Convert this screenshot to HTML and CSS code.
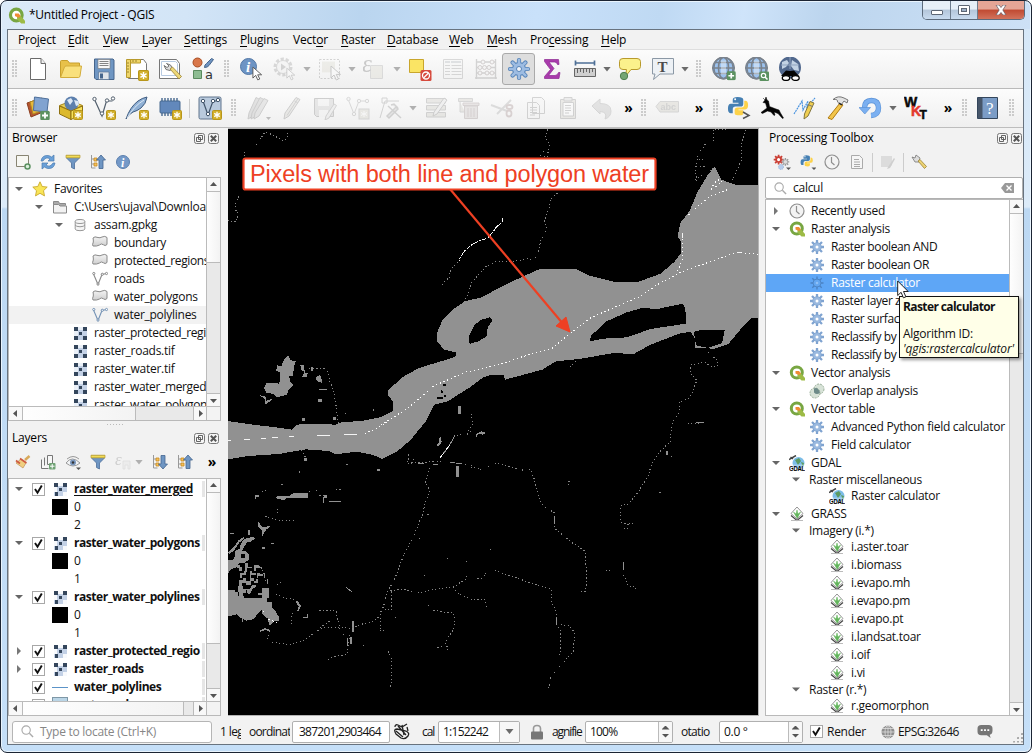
FILE: index.html
```html
<!DOCTYPE html>
<html lang="en">
<head>
<meta charset="utf-8">
<title>*Untitled Project - QGIS</title>
<link rel="stylesheet" href="styles.css">
</head>
<body>
<svg class="defs" aria-hidden="true">
<defs>
<linearGradient id="gloss" x1="0" y1="0" x2="0" y2="1"><stop offset="0" stop-color="#f4f4f4"/><stop offset="1" stop-color="#cfcfcf"/></linearGradient>
<symbol id="star-badge" viewBox="0 0 10 10"><rect x=".5" y=".5" width="9" height="9" rx="1" fill="#d2b02c" stroke="#b8961a"/><path d="M5 1.800v6.400M2.200 3.400l5.600 3.200M7.800 3.400L2.200 6.600" stroke="#fff" stroke-width="1.300"/></symbol>
<symbol id="plus-badge" viewBox="0 0 10 10"><rect x=".3" y=".3" width="9.400" height="9.400" rx="1.500" fill="#5b9160"/><path d="M5 2v6M2 5h6" stroke="#fff" stroke-width="1.800"/></symbol>
<symbol id="cursor" viewBox="0 0 12 16"><path d="M1 1v12l3-3 2.300 5 2.200-1-2.300-4.600h4.300z" fill="#fff" stroke="#555" stroke-width="1"/></symbol>
<symbol id="new" viewBox="0 0 24 24"><path d="M4.500 1.500h10.500l4.500 5v16h-15z" fill="#fff" stroke="#6b6b6b"/><path d="M15 1.500v5h4.500" fill="#eee" stroke="#6b6b6b"/></symbol>
<symbol id="open" viewBox="0 0 24 24"><path d="M1.500 20V4.500q0-1 1-1h6l2 2.500h10v4" fill="#e8c14a" stroke="#c79f2c"/><path d="M1.500 20.500L5.500 10q.3-1 1.500-1h15.500l-1.500 10q-.3 1.500-1.500 1.500z" fill="#f9e07c" stroke="#d3ac3a"/></symbol>
<symbol id="save" viewBox="0 0 24 24"><path d="M2.500 2h18.500l1 1v19.500h-18l-1.500-1.500z" fill="#6f96c3" stroke="#46658c"/><path d="M6 2.500h12v9H6z" fill="#f7f7f7" stroke="#777" stroke-width=".6"/><path d="M7.500 4.500h9M7.500 6.500h9M7.500 8.500h9" stroke="#777" stroke-width=".9"/><path d="M6.500 15h10.500v7.500H6.500z" fill="#dfe4ea" stroke="#5d7796" stroke-width=".7"/><path d="M8 16.500h3v5H8z" fill="#46658c"/></symbol>
<symbol id="layout" viewBox="0 0 24 24"><path d="M3.500 5.500l4-3h11l3 4v15h-18z" fill="#fff" stroke="#777"/><path d="M1.500 2.500h4v18h-4zM5.500 2.500h10v3.500h-10z" fill="#efd56a" stroke="#b89a2c"/><path d="M2 6h2M2 9h2M2 12h2M2 15h2M8 3v2M11 3v2" stroke="#8b7420" stroke-width=".8"/><use href="#star-badge" x="13" y="13" width="11" height="11"/></symbol>
<symbol id="layoutmgr" viewBox="0 0 24 24"><path d="M1.500 2.500h17l3 4v15h-20z" fill="#fff" stroke="#777"/><path d="M3.500 4.500h14l2 2v12h-16z" fill="none" stroke="#b8cbe2"/><path d="M8.500 6.500l4 1.500 2 3.500-2.500 2-4-1-2-4 3 2 2-1.500z" fill="#ddd" stroke="#777"/><path d="M12 12l9 10 2.500-2.500-9-9.500z" fill="#ecd778" stroke="#998133" stroke-width=".8"/></symbol>
<symbol id="style" viewBox="0 0 24 24"><circle cx="6.500" cy="5.500" r="4.500" fill="#d9774a" stroke="#a84d22"/><path d="M13.500 10.500q0-3 2-4l5-5 2 1-4.500 6q-1.500 2-4.500 2z" fill="#6e93c0" stroke="#46658c"/><path d="M2.500 13.500h8v8h-8z" fill="#8dbc92" stroke="#5a8a5e"/><text x="14" y="21.500" class="glyph-a">a</text></symbol>
<symbol id="identify" viewBox="0 0 24 24"><circle cx="8.500" cy="9.500" r="8" fill="#6d94c4" stroke="#5378a6"/><text x="6" y="15" class="glyph-i">i</text><use href="#cursor" x="12" y="9" width="11" height="15"/></symbol>
<symbol id="action" viewBox="0 0 24 24"><circle cx="10" cy="10" r="7.500" fill="none" stroke="#888" stroke-width="4" stroke-dasharray="3 1.700"/><circle cx="10" cy="10" r="6.500" fill="#eee" stroke="#888"/><path d="M8 6.500l5 3.500-5 3.500z" fill="#777"/><use href="#cursor" x="13" y="10" width="10" height="14"/></symbol>
<symbol id="select" viewBox="0 0 24 24"><path d="M1.500 2.500h20v19h-20z" fill="none" stroke="#777" stroke-dasharray="2 1.500"/><path d="M4 4.500h13v11H4z" fill="#d6d2b0"/><use href="#cursor" x="12" y="8" width="12" height="16"/></symbol>
<symbol id="expr" viewBox="0 0 24 24"><path d="M7.500 8.500h12v13h-12z" fill="#d6d2b0" stroke="#999"/><text x="-1" y="14.500" class="glyph-e">ε</text></symbol>
<symbol id="deselect" viewBox="0 0 24 24"><path d="M1.500 2.500h14v13h-14z" fill="#fae464" stroke="#c9a62c"/><rect x="12.500" y="13" width="11" height="11" rx="1.500" fill="#d64a3d"/><circle cx="18" cy="18.500" r="3.500" fill="none" stroke="#fff" stroke-width="1.300"/><path d="M15.500 21l5-5" stroke="#fff" stroke-width="1.300"/></symbol>
<symbol id="table" viewBox="0 0 24 24"><path d="M2.500 2.500h19v19h-19z" fill="#f5f5f5" stroke="#888"/><path d="M4 4h5v2H4zM10 4h10v2H10z" fill="#9ab"/><path d="M4 8.500h5M10.500 8.500h10M4 11.500h5M10.500 11.500h10M4 14.500h5M10.500 14.500h10M4 17.500h5M10.500 17.500h10" stroke="#888"/></symbol>
<symbol id="abacus" viewBox="0 0 24 24"><path d="M2.500 2v20M21.500 2v20M1 21h22M2 5h20M2 10.500h20M2 16h20" fill="none" stroke="#777" stroke-width="1.400"/><g fill="#eee" stroke="#866"><circle cx="9" cy="5" r="2"/><circle cx="18" cy="5" r="2"/><circle cx="6" cy="10.500" r="2"/><circle cx="10.500" cy="10.500" r="2"/><circle cx="15" cy="10.500" r="2"/><circle cx="6" cy="16" r="2"/><circle cx="13" cy="16" r="2"/><circle cx="18" cy="16" r="2"/></g></symbol>
<symbol id="gear" viewBox="0 0 24 24"><g stroke="#5583b8" stroke-width="4.200" stroke-linecap="round"><path d="M12 3v18M3 12h18M5.600 5.600l12.800 12.800M18.400 5.600L5.600 18.400"/></g><circle cx="12" cy="12" r="7" fill="#5583b8"/><g stroke="#9dbce2" stroke-width="2.600" stroke-linecap="round"><path d="M12 3v18M3 12h18M5.600 5.600l12.800 12.800M18.400 5.600L5.600 18.400"/></g><circle cx="12" cy="12" r="6" fill="#9dbce2"/><circle cx="12" cy="12" r="2.500" fill="#f4f6fa" stroke="#5583b8"/></symbol>
<symbol id="sgear" viewBox="0 0 16 16"><path d="M8 1v14M1 8h14M3 3l10 10M13 3L3 13" stroke="#7fa3d0" stroke-width="2.300"/><circle cx="8" cy="8" r="4.300" fill="#9ab9df" stroke="#7fa3d0" stroke-width=".8"/><circle cx="8" cy="8" r="1.500" fill="#fff"/></symbol>
<symbol id="sgear-sel" viewBox="0 0 16 16"><path d="M8 1.500v13M1.500 8h13M3.300 3.300l9.400 9.400M12.700 3.300l-9.400 9.400" stroke="#4b83c4" stroke-width="1.400"/><circle cx="8" cy="8" r="4" fill="#63a6f0" stroke="#4b83c4" stroke-width=".9"/><circle cx="8" cy="8" r="1.300" fill="#8fc0f7"/></symbol>
<symbol id="sigma" viewBox="0 0 24 24"><path d="M4.500 2.500h14l.5 5h-1.500q-.5-2.500-3-2.500H9l5 6.500-5.500 7H15q2.500 0 3.500-3H20l-1 6H4.500v-2l6-7-6-8z" fill="#a93bac" stroke="#8d2a92" stroke-width=".7"/></symbol>
<symbol id="measure" viewBox="0 0 24 24"><path d="M2 6h20M2.500 3.500v5M21.500 3.500v5" stroke="#4e6f96" stroke-width="1.700"/><path d="M1.500 11.500h21v8h-21z" fill="#cfcfcf" stroke="#666"/><path d="M4.500 12v4M7.500 12v3M10.500 12v4M13.500 12v3M16.500 12v4M19.500 12v3" stroke="#666"/></symbol>
<symbol id="tip" viewBox="0 0 24 24"><path d="M5 1.500h14q3.500 0 3.500 3v5q0 3-3.500 3h-6l-5.500 7 1-7H5q-3.500 0-3.500-3v-5q0-3 3.500-3z" fill="#fbf18c" stroke="#b89a2c"/><circle cx="6" cy="19" r="3.700" fill="#74a574" stroke="#4f7f50"/></symbol>
<symbol id="text" viewBox="0 0 24 24"><path d="M1.500 1.500h21v15.500H9l-6.500 5.500 1.500-5.500H1.500z" fill="#edf1f5" stroke="#8b98a5"/><text x="6.500" y="14.500" class="glyph-t">T</text></symbol>
<symbol id="globe" viewBox="0 0 24 24"><circle cx="11.500" cy="11" r="11" fill="#6d8fb8" stroke="#777" stroke-width=".8"/><circle cx="11.500" cy="11" r="9.800" fill="#9cc2ee"/><path d="M0 11h23M2.500 5.500h18M2.500 16.500h18" stroke="#7a828c" stroke-width="1.300" fill="none"/><ellipse cx="11.500" cy="11" rx="5" ry="10.700" fill="none" stroke="#7a828c" stroke-width="1.600"/><ellipse cx="11.500" cy="11" rx="9.500" ry="10.700" fill="none" stroke="#7a828c" stroke-width="1.200"/><path d="M9 3.500h5v14H9z" fill="#fff" opacity=".4"/></symbol>
<symbol id="globe-add" viewBox="0 0 24 24"><use href="#globe" width="24" height="24"/><use href="#plus-badge" x="14.500" y="14" width="9.500" height="9.500"/></symbol>
<symbol id="globe-find" viewBox="0 0 24 24"><use href="#globe" width="24" height="24"/><rect x="14.500" y="14.500" width="9.500" height="9.500" rx="1" fill="#5b9160"/><circle cx="18.500" cy="18.500" r="2.200" fill="none" stroke="#fff" stroke-width="1.200"/><path d="M20 20l2.500 2.500" stroke="#fff" stroke-width="1.500"/></symbol>
<symbol id="binoc" viewBox="0 0 24 24"><circle cx="12" cy="10.500" r="11" fill="#52698e"/><path d="M4 5l5-2 2 3-3 4-4 2zM14 3l6 4 1 7-5-1-3-4z" fill="#c2d2e4"/><path d="M3 8h18M12 0v12" stroke="#8fa3bf"/><path d="M8 13.500l4 .5 4-.5 5 5.500H3z" fill="#050505"/><ellipse cx="8" cy="21" rx="3.700" ry="2.400" fill="#fff" stroke="#000" stroke-width="1.300"/><ellipse cx="17.500" cy="21" rx="3.700" ry="2.400" fill="#fff" stroke="#000" stroke-width="1.300"/></symbol>
<symbol id="dsm" viewBox="0 0 24 24"><path d="M1 7l12-4 4 13-12 5z" fill="#b4552f" stroke="#8c3e20"/><path d="M4 6l12-4 2 12-11 4z" fill="#e8b93c" stroke="#b28a20"/><path d="M8.500 1l14 2-1.500 13-13.500-1.500z" fill="#81a3d0" stroke="#4e6f9b"/><use href="#plus-badge" x="14" y="14.500" width="10" height="10"/></symbol>
<symbol id="gpkg" viewBox="0 0 24 24"><path d="M.5 9.500L12 5l11.500 4.500L12 15z" fill="#e9cf58" stroke="#a98717"/><circle cx="12.500" cy="7.500" r="7" fill="#5c7fad"/><path d="M8 4l4-2 2 3-3 4zM15 4l4 1 1 4-3 1z" fill="#dce8f5"/><path d="M.5 10L12 15v8.500L.5 18z" fill="#dcb92c" stroke="#8f7112"/><path d="M12 15l11.500-5v8L12 23.500z" fill="#f7e25a" stroke="#8f7112"/><use href="#star-badge" x="14" y="14" width="10" height="10"/></symbol>
<symbol id="shp" viewBox="0 0 24 24"><path d="M2.500 3.500L10 20l4.500-15h6" fill="none" stroke="#53606e" stroke-width="1.200"/><g fill="#fff" stroke="#53606e"><circle cx="2.500" cy="3" r="1.700"/><circle cx="10" cy="17.500" r="1.700"/><circle cx="15" cy="4.500" r="1.700"/><circle cx="21" cy="2.500" r="1.700"/></g><use href="#star-badge" x="14" y="14" width="10" height="10"/></symbol>
<symbol id="feather" viewBox="0 0 24 24"><path d="M1 23Q5 11 13 5q4-3 9-4-1 7-6 11-4 3-8 4-4 2-7 7z" fill="#8fb0d5" stroke="#3f5c80"/><path d="M2 22Q9 10 19 4" fill="none" stroke="#dbe8f6"/><use href="#star-badge" x="14" y="14" width="10" height="10"/></symbol>
<symbol id="chip" viewBox="0 0 24 24"><path d="M4 2v18M7 2v18M10 2v18M13 2v18M16 2v18M19 2v18" stroke="#47688f" stroke-width="1.400"/><rect x="2" y="5" width="20" height="12" rx="1" fill="#6288bb" stroke="#47688f"/><use href="#star-badge" x="14" y="14" width="10" height="10"/></symbol>
<symbol id="virtual" viewBox="0 0 24 24"><rect x="1" y="1" width="22" height="22" rx="1.500" fill="#b9cadd" stroke="#60758d"/><path d="M5 5l5 14 5-14h4" fill="none" stroke="#42556a" stroke-width="1.200"/><g fill="#fff" stroke="#42556a"><circle cx="5" cy="5" r="1.700"/><circle cx="10" cy="18" r="1.700"/><circle cx="15" cy="5" r="1.700"/><circle cx="20" cy="4" r="1.700"/></g><use href="#star-badge" x="14" y="14" width="10" height="10"/></symbol>
<symbol id="pencil" viewBox="0 0 24 24"><path d="M16 1.500l4 2L9 20l-5 3 1-6z" fill="#ccc8b8" stroke="#666"/><path d="M14.500 5l3.500 2M18 2.500L7 19.500" stroke="#777"/></symbol>
<symbol id="pencils" viewBox="0 0 24 24"><path d="M9 1.500l4 2L6 20l-5 3 1-6z" fill="#aaa" stroke="#666"/><path d="M13 1.500l4 2L9 20l-5 3 1-6z" fill="#aaa" stroke="#666"/><path d="M17 2.500l4 2L12 20l-5 3 1-6z" fill="#bbb" stroke="#666"/><path d="M19 21h5l-2.500 3z" fill="#333"/></symbol>
<symbol id="save-edit" viewBox="0 0 24 24"><path d="M1.500 2.500h19v18h-17l-2-2z" fill="#bbb" stroke="#666"/><path d="M5 3h11v7H5zM6 14h9v7H6z" fill="#eee"/><path d="M21 8l2.500 1.500L16 22l-4 2 1-4z" fill="#ddd" stroke="#777"/></symbol>
<symbol id="addline" viewBox="0 0 24 24"><path d="M2 3l6 15 5-13h9" fill="none" stroke="#888"/><g fill="#eee" stroke="#888"><circle cx="2.500" cy="3" r="1.700"/><circle cx="8" cy="18" r="1.700"/><circle cx="13" cy="5" r="1.700"/><circle cx="21" cy="5" r="1.700"/></g><rect x="13" y="13" width="10" height="10" fill="#cfc8a8" stroke="#888"/><path d="M18 15v6M15 16.500l6 3M21 16.500l-6 3" stroke="#fff"/></symbol>
<symbol id="vertex" viewBox="0 0 24 24"><path d="M1 22L6 5h14M3 2h5v5H3z" fill="none" stroke="#777"/><path d="M8 20l9-9 2 2-9 9zM9 10l13 12M12 9l3-1 4 4" fill="#bbb" stroke="#777" stroke-width="1.500"/></symbol>
<symbol id="form" viewBox="0 0 24 24"><path d="M2.500 2.500h19v4.500h-19zM2.500 9.500h19V14h-19zM2.500 16.500h19V21h-19z" fill="#c8c3a8" stroke="#777"/><path d="M20 2l3 2L13 18l-4 2 1-4z" fill="#ddd" stroke="#666"/></symbol>
<symbol id="trash" viewBox="0 0 24 24"><path d="M1.500 2.500h14v3h-14zM3 6v10h5" fill="#c8c3a8" stroke="#888"/><path d="M6 7h16v2.500H6zM7.500 10h13v12.500h-13z" fill="#ccb8b4" stroke="#977"/><path d="M11 12v9M14 12v9M17 12v9" stroke="#977"/></symbol>
<symbol id="cut" viewBox="0 0 24 24"><path d="M1 9l16 6M7 18L21 4" stroke="#999" stroke-width="2"/><ellipse cx="19.500" cy="11" rx="3" ry="2" fill="none" stroke="#b07070" stroke-width="1.800"/><ellipse cx="19" cy="17.500" rx="2.500" ry="3" fill="none" stroke="#b07070" stroke-width="1.800"/></symbol>
<symbol id="copy" viewBox="0 0 24 24"><path d="M9.500 1.500h9l3 3v13h-12zM4.500 6.500h9l3 3v13h-12z" fill="#f4f4f4" stroke="#777"/><path d="M7 11.500h7M7 14h7M7 16.500h7M7 19h5" stroke="#777"/></symbol>
<symbol id="paste" viewBox="0 0 24 24"><path d="M4.500 3.500h15v19h-15z" fill="#cfc9b0" stroke="#777"/><path d="M7 6.500h10.500V20H7z" fill="#fff" stroke="#777"/><path d="M8 1.500h8V5H8zM9 9.500h6M9 12h6M9 14.500h6M9 17h4" fill="#ccc" stroke="#777"/></symbol>
<symbol id="undo" viewBox="0 0 24 24"><path d="M3 10l8-7v4.500q11 0 11 7.500 0 6-6 8 3-7-5-7.500V18z" fill="#b0b0b0" stroke="#888"/></symbol>
<symbol id="abc" viewBox="0 0 24 24"><path d="M1 10.500l4-5h18.500v10.500H5z" fill="#c6c0a0" stroke="#888"/><text x="5.500" y="14" class="glyph-abc">abc</text></symbol>
<symbol id="python" viewBox="0 0 24 24"><path d="M11 2q-5 0-5 3v3h6v1H4q-3 0-3 5t3 5h2v-4q0-3 3-3h5q3 0 3-3V5q0-3-6-3z" fill="#4680b3"/><path d="M11 21q6 1 6-2v-3h-5v-1h7q3 0 3-4.500T19 6h-1v4q0 3-3 3h-4q-3 0-3 3v3q0 2 3 2z" fill="#fcd24a"/><circle cx="8.500" cy="4.500" r="1" fill="#fff"/></symbol>
<symbol id="python-c" viewBox="0 0 24 24"><use href="#python" x="0" y="-1" width="23" height="23"/><path d="M16 16l6 3.500-6 3" fill="none" stroke="#555" stroke-width="1.500"/></symbol>
<symbol id="deer" viewBox="0 0 24 24"><path d="M6 1l1 3 1.500 1 1 5.500 6.500 2.500 3 1 1.500 3 3 5-1 .5-4.500-5-4-1.500 1 3-1 .5-3-3.500-3.500-1-5 2.500L1 16.500l4-3L7 12 5.500 7 3 6.500 5 4zM3 2l2 2" fill="#030303" stroke="#030303" stroke-width=".5"/></symbol>
<symbol id="wave" viewBox="0 0 24 24"><path d="M1 18L9 5l1 9L15 5l-1 6L22 2" fill="none" stroke="#4b94e0" stroke-width="1.200" stroke-dasharray="2 .7"/><path d="M17 5.500l4 1.500-6 13-4 3 .5-5z" fill="#f0cf52" stroke="#83763d"/><path d="M16 9l3.500 1.500" stroke="#777"/></symbol>
<symbol id="hammer" viewBox="0 0 24 24"><path d="M2 22L14 7l3 2L6 23.500z" fill="#f2c54b" stroke="#b07b12"/><path d="M7 3.500Q12-1 18 2l4 2-1 3-3-2-3 4-3.500-3q1-3-4.500-2.500z" fill="#e3e3e3" stroke="#777"/><path d="M13 7l3 2" stroke="#222" stroke-width="1.500"/></symbol>
<symbol id="rotate" viewBox="0 0 24 24"><path d="M5.500 12q0-7.500 7-7.500t7 7.500q0 7-7.500 7.500" fill="none" stroke="#5b92d6" stroke-width="5.400"/><path d="M5.500 12q0-7.500 7-7.500t7 7.500q0 7-7.500 7.500" fill="none" stroke="#7bb0f1" stroke-width="4.200"/><path d="M0 11.500h11.500L5.800 18z" fill="#7bb0f1" stroke="#5b92d6" stroke-width=".7"/></symbol>
<symbol id="wkt" viewBox="0 0 24 24"><text x="0" y="11" class="glyph-w">W</text><text x="7" y="20" class="glyph-w red">K</text><text x="15.500" y="23" class="glyph-w small">T</text></symbol>
<symbol id="help" viewBox="0 0 24 24"><path d="M1.500 1.500h20v21h-20z" fill="#7b9cc6" stroke="#34465c"/><path d="M2 2h4.500v20H2z" fill="#47566a"/><text x="10" y="17.500" class="glyph-q">?</text></symbol>
<symbol id="addlyr" viewBox="0 0 16 16"><path d="M1.500 1.500h12v11h-12z" fill="#f7f7f2" stroke="#888472"/><circle cx="12.500" cy="12.500" r="2.500" fill="#dcefdc" stroke="#5b9160" stroke-width="1.500"/></symbol>
<symbol id="refresh" viewBox="0 0 16 16"><path d="M1 7q1-6 7-5.500 2 .2 3.500 1.500L14 1v6H8l2-2Q6 2 3 7zM15 9q-1 6-7 5.500-2-.2-3.500-1.500L2 15V9h6l-2 2q4 3 7-2z" fill="#6aa0d8" stroke="#4a7bb0" stroke-width=".7"/></symbol>
<symbol id="filter" viewBox="0 0 16 16"><path d="M1.500 1.500h13V4L9.500 9v6l-3-1.500V9l-5-5z" fill="#6f96c3" stroke="#4c6f9b" stroke-width=".8"/><path d="M1 1.200h14v2.600H1z" fill="#f3dc55" stroke="#b89a2c" stroke-width=".7"/></symbol>
<symbol id="collapse" viewBox="0 0 16 16"><path d="M1.500 1v13h4M1.500 5h3M1.500 10h3" fill="none" stroke="#999"/><path d="M4 4h3v3H4zM4 9h3v3H4z" fill="#f6c25c" stroke="#c98a20" stroke-width=".8"/><path d="M11 1l4.500 5H13v8.500H9V6H6.500z" fill="#6f96c3" stroke="#44658f" stroke-width=".8"/></symbol>
<symbol id="expand" viewBox="0 0 16 16"><path d="M1.500 1v13h4M1.500 5h3M1.500 10h3" fill="none" stroke="#999"/><path d="M4 4h3v3H4zM4 9h3v3H4z" fill="#f6c25c" stroke="#c98a20" stroke-width=".8"/><path d="M11 15l4.500-5H13V1.500H9V10H6.500z" fill="#6f96c3" stroke="#44658f" stroke-width=".8"/></symbol>
<symbol id="info" viewBox="0 0 16 16"><circle cx="8" cy="8" r="6.500" fill="#7499c8" stroke="#5c80ae"/><text x="6" y="12.500" class="glyph-is">i</text></symbol>
<symbol id="fav" viewBox="0 0 16 16"><path d="M8 .8l2.200 4.700 5 .6-3.700 3.600 1 5.200L8 12.300l-4.500 2.600 1-5.200L.8 6.100l5-.6z" fill="#f9e557" stroke="#c9a92c" stroke-width=".9"/></symbol>
<symbol id="folder" viewBox="0 0 16 16"><path d="M1.500 13.500v-11h5l1 2h6v2" fill="#aaa" stroke="#8a8a8a"/><path d="M1.500 5.500h5l1.500 1.500h6.500v7h-13z" fill="#f2f2f2" stroke="#8a8a8a"/></symbol>
<symbol id="db" viewBox="0 0 16 16"><path d="M2.500 4v8.500q0 2 5.500 2t5.500-2V4" fill="#f5f5f5" stroke="#8a8a8a"/><ellipse cx="8" cy="4" rx="5.500" ry="2.300" fill="#f5f5f5" stroke="#8a8a8a"/><path d="M2.500 8q1 2 5.500 2t5.500-2" fill="none" stroke="#8a8a8a"/></symbol>
<symbol id="poly" viewBox="0 0 16 16"><path d="M1 3q1.500-2 5-.5 2 .8 4-.5 3-1.500 5 .5v7q-2 2-3.500.3Q9 8 7.500 10 5 11.500 1 11q-1-1 .3-4Q1.500 5 1 3z" fill="url(#gloss)" stroke="#8a8a8a"/></symbol>
<symbol id="line" viewBox="0 0 16 16"><path d="M1.500 3L6 13.500 10 3.500l4.500-1" fill="none" stroke="currentColor" stroke-width="1.100"/><g fill="#fff" stroke="currentColor"><circle cx="1.800" cy="2.500" r="1.100"/><circle cx="6" cy="13" r="1.100"/><circle cx="10.300" cy="3.300" r="1.100"/><circle cx="14.500" cy="2.500" r="1.100"/></g></symbol>
<symbol id="raster" viewBox="0 0 13 13"><path d="M0 0h13v13H0z" fill="#c3d1e6"/><path d="M4 0h5v3H4zM0 4h4v5H0z" fill="#eaf0f8"/><path d="M0 0h4v4H0zM9 0h4v4H9zM5 5h3v3H5zM0 9h4v4H0zM9 9h4v4H9z" fill="#34465c"/></symbol>
<symbol id="raster-l" viewBox="0 0 13 13"><path d="M0 0h13v13H0z" fill="#c3d1e6"/><path d="M4 0h5v3H4zM0 4h3v5H0zM9 9h4v4H9z" fill="#f7f9fc"/><path d="M0 0h4v4H0zM9 0h4v4H9zM5 5h3v3H5zM1 9h3v4H1z" fill="#34465c"/></symbol>
<symbol id="q" viewBox="0 0 16 16"><circle cx="7.800" cy="7.500" r="5.500" fill="#fff" stroke="#78a642" stroke-width="3"/><path d="M8.500 8.500h3.500l4 4.500v2.500h-3.500l-4-4z" fill="#9dbb45"/><path d="M6.500 6h3.500l2 2.500-2 1.500-3.500-1.500z" fill="#ef8b35"/></symbol>
<symbol id="clock" viewBox="0 0 16 16"><circle cx="8" cy="8" r="7" fill="#f3f3f3" stroke="#8f8f8f" stroke-width="1.200"/><path d="M7.500 3v5.500l3 2.500" fill="none" stroke="#8f8f8f" stroke-width="1.200"/></symbol>
<symbol id="overlap" viewBox="0 0 16 16"><circle cx="10" cy="6" r="5" fill="#d7e2d7" stroke="#9bb09b" stroke-dasharray="2 1"/><circle cx="6" cy="10" r="5" fill="#d7e2d7" stroke="#9bb09b" stroke-dasharray="2 1"/><path d="M5 5.500q4-2 6 4-3 3-6 0z" fill="#6d8a88"/></symbol>
<symbol id="gdal" viewBox="0 0 16 16"><circle cx="9.500" cy="8" r="6" fill="#7cbde8"/><path d="M6 5l4-2 2 3-3 4zM12 7l3 1-1 4z" fill="#5c9b62"/><path d="M0 4.500L7 .5M4 4L1.500 2" stroke="#444" stroke-width="1.500"/><path d="M0 9.500h16V16H0z" fill="#fff" opacity=".3"/><text x="0" y="15.500" class="glyph-g" textLength="16" lengthAdjust="spacingAndGlyphs">GDAL</text></symbol>
<symbol id="grass" viewBox="0 0 16 16"><path d="M2 9.500l6 5 6-5" fill="none" stroke="#444" stroke-width="1.200"/><path d="M2 14.500h12" stroke="#bbb"/><path d="M8 1l6 6.500-6 5.500-6-5.500z" fill="#fff" stroke="#888" stroke-width=".9"/><path d="M8 12L4.500 6 7 8l1-4 1 4 2.500-2L8.500 12z" fill="#62b45b" stroke="#62b45b" stroke-width=".5"/></symbol>
<symbol id="broom" viewBox="0 0 16 16"><path d="M10 6l4.500-4" stroke="#d8a95a" stroke-width="2.500"/><path d="M6 5l5 4-3 5-7-5z" fill="#f0cf80" stroke="#b8864a" stroke-width=".6"/><path d="M1 6.500l4 3M5 4.500l6.500 4.500" stroke="#cf5b41" stroke-width="1.700"/></symbol>
<symbol id="group" viewBox="0 0 16 16"><path d="M1.500 5.500v9h7M4.500 3.500v8M7.500 1.500h5v9h-5z" fill="#f7f7f7" stroke="#777"/><rect x="9" y="9" width="6.500" height="6.500" rx="1" fill="#6fa274"/><path d="M12.200 10v4.500M10 12.200h4.500" stroke="#fff"/></symbol>
<symbol id="eye" viewBox="0 0 16 16"><path d="M1 9Q7 1 15 9 8 15 1 9z" fill="#f1f3f5" stroke="#999"/><circle cx="8" cy="8.500" r="3" fill="#7996bc"/><circle cx="8" cy="8.500" r="1.200" fill="#333"/><path d="M2 5q6-5 12 0" fill="none" stroke="#999"/><path d="M11 13.500h5L13.500 16z" fill="#555"/></symbol>
<symbol id="exprf" viewBox="0 0 16 16"><text x="0" y="11" class="glyph-es">ε</text><path d="M8 7h7v8h-2v-4h-3v4H8z" fill="#ddd" stroke="#aaa" stroke-width=".7"/></symbol>
<symbol id="gears" viewBox="0 0 18 16"><g transform="scale(.7)"><path d="M8 1v14M1 8h14M3 3l10 10M13 3L3 13" stroke="#cb3f35" stroke-width="2.500"/><circle cx="8" cy="8" r="3.500" fill="#fff" stroke="#cb3f35" stroke-width="2.500"/></g><g transform="translate(8 3.500) scale(.55)"><path d="M8 1v14M1 8h14M3 3l10 10M13 3L3 13" stroke="#999" stroke-width="2.500"/><circle cx="8" cy="8" r="4" fill="#ddd" stroke="#999"/></g><circle cx="8" cy="13" r="2.500" fill="#b6cceb" stroke="#9ab4d8" stroke-dasharray="1 1"/><path d="M13 13.500h5L15.500 16z" fill="#555"/></symbol>
<symbol id="python-m" viewBox="0 0 16 16"><use href="#python" x="0" y="0" width="14" height="14"/><path d="M11.500 13.500h5L14 16z" fill="#555"/></symbol>
<symbol id="doc" viewBox="0 0 16 16"><path d="M2.500 1.500h8l3 3v10h-11z" fill="#f5f5f5" stroke="#aaa"/><path d="M5 5.500h5M5 8h6M5 10.500h6M5 12.500h6" stroke="#aaa"/></symbol>
<symbol id="note" viewBox="0 0 16 16"><path d="M1 2h11v9l-2 2H1z" fill="#dcdcdc"/><path d="M14 4l-6 9-1 2 3-1 5-9z" fill="#cfcfcf"/></symbol>
<symbol id="wrench" viewBox="0 0 16 16"><path d="M1 3l3 1 1-3 4 3-1 4-4 0z" fill="#ddd" stroke="#777" stroke-width=".8"/><path d="M7 7l2-1.500 6.500 7-2 2z" fill="#edd372" stroke="#9a8335" stroke-width=".8"/></symbol>
<symbol id="lens" viewBox="0 0 14 14"><circle cx="5.500" cy="5.500" r="4.500" fill="none" stroke="#aaa" stroke-width="1.200"/><path d="M9 9l4 4" stroke="#aaa" stroke-width="1.500"/></symbol>
<symbol id="float" viewBox="0 0 11 11"><rect x=".5" y=".5" width="10" height="10" rx="2" fill="#f5f5f5" stroke="#777"/><path d="M4.500 2.500h4v4h-4zM2.500 4.500h4v4h-4z" fill="#f5f5f5" stroke="#555" stroke-width=".9"/></symbol>
<symbol id="close" viewBox="0 0 11 11"><rect x=".5" y=".5" width="10" height="10" rx="2" fill="#f5f5f5" stroke="#777"/><path d="M2.800 2.800l5.400 5.400M8.200 2.800L2.800 8.200" stroke="#555" stroke-width="2"/></symbol>
<symbol id="tick" viewBox="0 0 13 13"><path d="M3 6l2.500 3.800L9.800 2.500" fill="none" stroke="#111" stroke-width="1.900"/></symbol>
</defs>
</svg>

<div class="window">
<header class="titlebar">
  <svg class="logo"><use href="#q"/></svg><span class="title">*Untitled Project - QGIS</span>
  <div class="winbtns"><span class="wb"><i class="min"></i></span><span class="wb"><i class="max"></i></span><span class="wb x"><svg viewBox="0 0 12 10"><path d="M1 0h3l2 2.500L8 0h3L7.800 5 11 10H8L6 7.500 4 10H1l3.200-5z" fill="#fff" stroke="#5d5560" stroke-width=".7"/></svg></span></div>
</header>
<div class="app">
<nav class="menu"><span>Pro<u>j</u>ect</span><span><u>E</u>dit</span><span><u>V</u>iew</span><span><u>L</u>ayer</span><span><u>S</u>ettings</span><span><u>P</u>lugins</span><span>Vect<u>o</u>r</span><span><u>R</u>aster</span><span><u>D</u>atabase</span><span><u>W</u>eb</span><span><u>M</u>esh</span><span>Pro<u>c</u>essing</span><span><u>H</u>elp</span></nav>

<div class="toolbar">
<b class="grip"></b>
<span class="tb"><svg><use href="#new"/></svg></span><span class="tb"><svg><use href="#open"/></svg></span><span class="tb"><svg><use href="#save"/></svg></span><span class="tb"><svg><use href="#layout"/></svg></span><span class="tb"><svg><use href="#layoutmgr"/></svg></span><span class="tb"><svg><use href="#style"/></svg></span>
<b class="grip wide"></b>
<span class="tb"><svg><use href="#identify"/></svg></span><span class="tb off"><svg><use href="#action"/></svg></span><i class="dd dim"></i><span class="tb off"><svg><use href="#select"/></svg></span><i class="dd dim"></i><span class="tb off"><svg><use href="#expr"/></svg></span><i class="dd dim"></i><span class="tb"><svg><use href="#deselect"/></svg></span><span class="tb off"><svg><use href="#table"/></svg></span><span class="tb off"><svg><use href="#abacus"/></svg></span><span class="tb pressed"><svg><use href="#gear"/></svg></span><span class="tb"><svg><use href="#sigma"/></svg></span><span class="tb"><svg><use href="#measure"/></svg></span><i class="dd"></i><span class="tb"><svg><use href="#tip"/></svg></span><span class="tb"><svg><use href="#text"/></svg></span><i class="dd"></i>
<b class="grip wide"></b>
<span class="tb"><svg><use href="#globe-add"/></svg></span><span class="tb"><svg><use href="#globe-find"/></svg></span><span class="tb"><svg><use href="#binoc"/></svg></span>
</div>

<div class="toolbar">
<b class="grip"></b>
<span class="tb"><svg><use href="#dsm"/></svg></span><span class="tb"><svg><use href="#gpkg"/></svg></span><span class="tb"><svg><use href="#shp"/></svg></span><span class="tb"><svg><use href="#feather"/></svg></span><span class="tb"><svg><use href="#chip"/></svg></span><b class="sep"></b><span class="tb"><svg><use href="#virtual"/></svg></span>
<b class="grip wide"></b>
<span class="tb off"><svg><use href="#pencils"/></svg></span><span class="tb off"><svg><use href="#pencil"/></svg></span><span class="tb off"><svg><use href="#save-edit"/></svg></span><span class="tb off"><svg><use href="#addline"/></svg></span><span class="tb off"><svg><use href="#vertex"/></svg></span><i class="dd dim"></i><span class="tb off"><svg><use href="#form"/></svg></span><span class="tb off"><svg><use href="#trash"/></svg></span><span class="tb off"><svg><use href="#cut"/></svg></span><span class="tb off"><svg><use href="#copy"/></svg></span><span class="tb off"><svg><use href="#paste"/></svg></span><span class="tb off"><svg><use href="#undo"/></svg></span><span class="more near">»</span>
<b class="grip"></b>
<span class="tb off"><svg><use href="#abc"/></svg></span><span class="more">»</span>
<b class="grip"></b>
<span class="tb"><svg><use href="#python-c"/></svg></span><span class="tb"><svg><use href="#deer"/></svg></span><span class="tb"><svg><use href="#wave"/></svg></span><span class="tb"><svg><use href="#hammer"/></svg></span><span class="tb"><svg><use href="#rotate"/></svg></span><i class="dd"></i><span class="tb"><svg><use href="#wkt"/></svg></span><span class="more">»</span>
<b class="grip"></b>
<span class="tb"><svg><use href="#help"/></svg></span><b class="grip wide"></b>
</div>

<main class="work">
<aside class="left">
  <section class="dock browser">
    <h2>Browser<span class="dockbtns"><svg><use href="#float"/></svg><svg><use href="#close"/></svg></span></h2>
    <div class="mini"><svg><use href="#addlyr"/></svg><svg><use href="#refresh"/></svg><svg><use href="#filter"/></svg><svg><use href="#collapse"/></svg><svg><use href="#info"/></svg></div>
    <div class="box">
      <div class="tree">
        <div class="row"><i class="tw open"></i><span class="ic"><svg><use href="#fav"/></svg></span><span>Favorites</span></div>
        <div class="row l1"><i class="tw open"></i><span class="ic"><svg><use href="#folder"/></svg></span><span>C:\Users\ujaval\Downloa</span></div>
        <div class="row l2"><i class="tw open"></i><span class="ic"><svg class="s14"><use href="#db"/></svg></span><span>assam.gpkg</span></div>
        <div class="row l3"><i class="tw"></i><span class="ic"><svg><use href="#poly"/></svg></span><span>boundary</span></div>
        <div class="row l3"><i class="tw"></i><span class="ic"><svg><use href="#poly"/></svg></span><span class="snug">protected_regions</span></div>
        <div class="row l3"><i class="tw"></i><span class="ic grey"><svg><use href="#line"/></svg></span><span>roads</span></div>
        <div class="row l3"><i class="tw"></i><span class="ic"><svg><use href="#poly"/></svg></span><span>water_polygons</span></div>
        <div class="row l3 hover"><i class="tw"></i><span class="ic blue"><svg><use href="#line"/></svg></span><span>water_polylines</span></div>
        <div class="row l2"><i class="tw"></i><span class="ic"><svg class="s13"><use href="#raster"/></svg></span><span class="snug">raster_protected_regio</span></div>
        <div class="row l2"><i class="tw"></i><span class="ic"><svg class="s13"><use href="#raster"/></svg></span><span>raster_roads.tif</span></div>
        <div class="row l2"><i class="tw"></i><span class="ic"><svg class="s13"><use href="#raster"/></svg></span><span>raster_water.tif</span></div>
        <div class="row l2"><i class="tw"></i><span class="ic"><svg class="s13"><use href="#raster"/></svg></span><span class="snug">raster_water_merged.</span></div>
        <div class="row l2"><i class="tw"></i><span class="ic"><svg class="s13"><use href="#raster"/></svg></span><span class="snug">raster_water_polygon</span></div>
      </div>
      <div class="vs"><i class="btn up"></i><i class="thumb"></i><i class="btn down"></i></div>
      <div class="hs"><i class="btn lf"></i><i class="thumb"></i><i class="btn rt"></i></div><div class="corner"></div>
    </div>
    <div class="splitter"></div>
  </section>
  <section class="dock layers">
    <h2>Layers<span class="dockbtns"><svg><use href="#float"/></svg><svg><use href="#close"/></svg></span></h2>
    <div class="mini"><svg><use href="#broom"/></svg><svg><use href="#group"/></svg><svg><use href="#eye"/></svg><svg><use href="#filter"/></svg><svg class="off"><use href="#exprf"/></svg><i class="dd dim"></i><svg><use href="#expand"/></svg><svg><use href="#collapse"/></svg><span class="more">»</span></div>
    <div class="box">
      <div class="tree bold">
        <div class="row"><i class="tw open"></i><i class="cb"><svg><use href="#tick"/></svg></i><span class="ic"><svg class="s13"><use href="#raster-l"/></svg></span><span class="ul">raster_water_merged</span></div>
        <div class="row leg"><i class="sw"></i><span>0</span></div><div class="row leg"><i class="sw none"></i><span>2</span></div>
        <div class="row"><i class="tw open"></i><i class="cb"><svg><use href="#tick"/></svg></i><span class="ic"><svg class="s13"><use href="#raster-l"/></svg></span><span>raster_water_polygons</span></div>
        <div class="row leg"><i class="sw"></i><span>0</span></div><div class="row leg"><i class="sw none"></i><span>1</span></div>
        <div class="row"><i class="tw open"></i><i class="cb"><svg><use href="#tick"/></svg></i><span class="ic"><svg class="s13"><use href="#raster-l"/></svg></span><span>raster_water_polylines</span></div>
        <div class="row leg"><i class="sw"></i><span>0</span></div><div class="row leg"><i class="sw none"></i><span>1</span></div>
        <div class="row"><i class="tw shut"></i><i class="cb"><svg><use href="#tick"/></svg></i><span class="ic"><svg class="s13"><use href="#raster-l"/></svg></span><span>raster_protected_regio</span></div>
        <div class="row"><i class="tw shut"></i><i class="cb"><svg><use href="#tick"/></svg></i><span class="ic"><svg class="s13"><use href="#raster-l"/></svg></span><span>raster_roads</span></div>
        <div class="row"><i class="tw"></i><i class="cb"><svg><use href="#tick"/></svg></i><span class="ic"><i class="ln"></i></span><span>water_polylines</span></div>
        <div class="row"><i class="tw"></i><i class="cb"><svg><use href="#tick"/></svg></i><span class="ic"><i class="fill"></i></span><span>water_polygons</span></div>
      </div>
      <div class="vs"><i class="btn up"></i><i class="thumb"></i><i class="btn down"></i></div>
      <div class="hs"><i class="btn lf"></i><i class="thumb"></i><i class="btn rt"></i></div><div class="corner"></div>
    </div>
  </section>
</aside>

<div class="canvas">
<svg class="map" viewBox="0 0 1568 1764" preserveAspectRatio="none">
<path class="water" fill-rule="evenodd" d="M0 879L60 888 140 898 190 905 205 890 240 887 320 890 330 884 400 878 450 868 487 850V820L473 800 475 785 520 745 565 720 620 703 672 687 676 674 640 665 618 640V615L635 575 665 545 700 520 750 508 830 465 920 424H1030L1070 443 1140 461H1215L1280 437 1320 402 1340 375V340L1330 325 1338 285 1365 250 1390 190 1420 140 1440 115 1460 155 1500 170H1568V570H1550L1520 600 1480 648 1440 662 1383 660 1380 630 1370 612 1340 615 1250 650 1200 678 1140 675 1040 693 970 700 930 725 820 755 815 740 780 740 755 748 720 775 650 820 610 830 585 880 540 936 500 971 455 993 430 981 380 971 320 979 300 969 230 964 150 978 60 984 0 994Z M775 568L783 575 768 600 765 625 740 640 715 648 712 625 730 590 750 575Z M1070 640L1075 622 1120 580 1180 553 1225 540 1270 543 1345 527 1353 540 1355 587 1250 603 1180 628 1110 632Z M1378 612L1400 605 1470 605 1462 645 1420 660 1385 652Z"/>
<path fill="#000" d="M636 768h10v6h-10zM630 785l8 6-6 6zM618 808h18v4h-18zM638 800h7v6h-7z"/>
<path class="water" d="M170 690l8-8 6 14 16 4-4 14-4 30h-12l6 20 8 6-14 14-6 16-28 8-10-10-22-4-8-14 8-14 24-2 14 4 2-34-12-6 4-16 12 4 6-18zM94 802l16 2 4 14 16-6-4 8-18 10v-18zM214 712h10l4 22 8 2-4 12h-14l8-16-10-8zM246 718h6v10h-6zM262 745l10-4 6 16-10 6-8-8zM270 782h22v5h-22zM266 812h12v11h-12zM312 868h8v8h-8zM220 870h8v8h-8zM681 833h8v24h-8z"/>
<path class="water" d="M196 1094h41v16h-41l-20-1-10 8-24-6 4-8h36zM80 1102h12v4h-8v8h-4zM286 1100h8v10h-10v16h-4v-12zM299 1119h35v3h-35zM226 990h6l4 10h-10zM442 1024h8v6h-8zM675 1014h8v32h-8zM1296 968h6v12h-6zM733 918l16-8 14 4-8 6-14-2-6 8zM626 928h4l2 14-8 12-8-2 8-8z"/>
<g transform="translate(0 1176)">
<path class="water" fill-rule="evenodd" d="M0 211h22v6h8v12h16v5h54v-8h-12v-6h14v-17h19v32h-6v12h14v16l10 8 12 20v12h-14l-14 14-6-22-14-10-4-14-14 14-8 12-22 5-20-9-10-10-24 6H0zM0 120h14l8-14v-14l12-6 4-16 12-14 24-6 6 4-10 10-14 4-8 12-8 14h12l10 10v14l-12 10-18 2-8 12-16 6-8 14H0zM38 103h12v12H38z"/>
<path class="water" d="M0 98l18-18 14-20 14-8v5l-14 12-12 20-16 14zM58 30h6v14h-6zM6 38h12v3H6zM88 0l8 16 10 6 22-6-16 14-10 18v-14l-12-12zM102 80h6v6h-6zM127 69h8v3h-8zM26 136h10v6h6v10h-8v-8h-8zM50 130h8v10h12v5H56v10h-6zM76 134h12v4h8v6H82v10h-6zM36 160h12v-6h6v12H42v8h-6zM64 152h8v8h10v5H68v10h-4zM86 158h10v4h8v6H90v6h-4zM34 180h10v-6h8v10h12v-10h12v10h-8v10H54v-5H40v12h-6zM78 182h6v-6h6v14H78zM30 198h14v8h8v14h-8v10H34v-14h-4zM54 206h10l8-10h10v5l-10 6-6 14h-8zM98 140h3v8h-3zM106 160h3v12h-3zM116 176h3v14h-3zM40 288h4v18h-4zM96 330l14-6 14 6v5l-14-5-14 5zM350 202l18 12-2 3-16-12zM204 242l12 14-6 16h-5l4-12-8-14zM222 290h12v-8h4v12h-16zM368 302h5v34h-5zM352 355h4v24h-4zM362 352h4v20h-4z"/>
</g>
<g class="dots">
<path d="M82 52L110 12l26 10 26 17 12-8 6-26M48 72v12M32 205l-8 15-2 24 6 12-2 26-26-4"/>
<path d="M945 4L938 25l14 25-8 36-24-6 18-12M975 195l-20 18-6 30-12 35 6 25-18 35-8 40-12 18-20-4-15 5-25 2-25 0-30 3-25 12-24 25-20 25-10 30-8 20"/>
<path d="M1532 5l-12 40v50l-18 40-12 30M1436 5v42M1440 5h32M1412 48l-20 30-10 40 6 45M1392 95h15M1385 115h25M1382 155l25-15M1425 130l15-15"/>
<path d="M687 395l-15 15-18 25 3 12-18 14-6 16M240 720h54l6 36 12 34 8 45 6 50M275 760l6 20M430 844v10M345 855h6M720 858l4 32-14 18-2 16 12-18M1420 673l14 12 15 12v18h-20l-20-12-40 8-2 24 20 22-12 34-12 20-28 12v24l-8 22M1360 885h40M1028 700l-20 20"/>
<path d="M1318 876l-7 30-2 35-26 24-28 38-12 40-30 50-30 36-20 2-2 50 30 12M1185 1186h15M1315 984h-8M1190 1186h-8v15h-12M1276 1094h4M1010 1060l-4 4v8"/>
<path d="M690 919l-18 4M630 1000h-12l-90 6 6-14v-20M548 992v8M658 1003l50 6 10 8 30 4v8M720 1010v10M770 1015l25-10 80 22 20-3 10 26 16 64 12 20 32 20v46l50 42 42 28 2 40 2 50-4 30h-20M595 1020l-2 14-10 26 14 30-12 30-10 40-20 50-45 95-18 52-18 28-14 50-12 30-18 15-40 10-28 12-28-4h-50l-24 12-25 20-22 12-14 4-20 6-20-6-28-2-14-10 2-12M590 1158h10"/>
<path d="M480 1388l34-5 55 13 38-12 60-7 36-24 4-8M738 1350h15l15-22M790 1328l65 22 54 20 48 14v38l14 30v36l14 22v64l-14 20M985 1490l25 3 16 22-4 54-20 24-30 32-18 26-6 38M667 1378l15 20 40 16h38l5 30M592 1432l16 14 34 8 22-2 6 20v26l-12 20-14 25 8 26M485 1390v55h-22M474 1570l10 20v78l-6 12M295 1594l22-8 36-8 8-56M320 1450l10 50 12 20M450 1448l2 60M1117 1328h20M1170 1340l6 14 8 20 20 0 6 16"/>
<path d="M218 966l12 24M158 1070h4M212 1030v8M100 1090l18-4 10 8M240 1090l22-2M270 1102h20M320 1086l20-4M145 1142v18M110 1165l50 14 40-2M146 1370l12-8M142 1400l30 10 30 6M190 1454l-4 40M350 1010h4M565 1230h4M648 1290h3M775 1264h3M706 1300l4 10M580 1342h8M495 1468h3M450 1508h20M400 1552h3M620 1560l12-4M270 1446h45M300 1480l-30 20M88 1310l14 14 8 30 10 20"/>
</g>
<path class="solid" d="M965 1163v26M1170 1302v24M971 1470v20M660 1003h8M562 1006h18M606 1009h14M676 1006h16M1385 884h22M672 922l-8 14-14 24-22 28"/>
<path class="bright part" d="M811 270v12l-16 14-10 14-16 20-30 10-20 12-20 18-13 20v10"/>
<path class="bright" d="M655 952l-10 14M638 976l-10 12M104 1448v4"/>
<g class="wdots"><path d="M442 898L530 842 610 773 705 732 800 711 865 688 960 660 1010 618 1075 568 1220 505 1270 470 1340 432 1505 373 1568 379M1330 430l15-35V315M1362 258h4M1382 242L1425 206 1480 184M1430 185l8-20 18-12 4 10-20 15"/><path d="M405 917l30-14 45-26M120 1474l32 12"/></g>
<path class="bright" d="M0 938h8M48 934h16M98 931h14M130 928h18M180 925h15M263 922h38M343 919h38M1344 315v14M1505 373h12"/>
</svg>
<svg class="note" viewBox="0 0 530 587"><path d="M222 61L336 197" stroke="#ee4023" stroke-width="2.200"/><path d="M342 204l-14-6 10-9z" fill="#ee4023" stroke="#ee4023"/><rect x="15.500" y="30.500" width="412" height="31" rx="2" fill="#fff" stroke="#ee4023" stroke-width="2.200"/><text x="22" y="54" textLength="399" class="callout">Pixels with both line and polygon water</text></svg>
</div>

<aside class="right dock">
  <h2>Processing Toolbox<span class="dockbtns"><svg><use href="#float"/></svg><svg><use href="#close"/></svg></span></h2>
  <div class="mini"><svg class="w18"><use href="#gears"/></svg><svg><use href="#python-m"/></svg><svg><use href="#clock"/></svg><svg><use href="#doc"/></svg><b class="sep"></b><svg><use href="#note"/></svg><b class="sep"></b><svg><use href="#wrench"/></svg></div>
  <div class="search"><svg><use href="#lens"/></svg><span>calcul</span><svg class="clear" viewBox="0 0 14 10"><path d="M0 5l4-5h9v10H4z" fill="#999"/><path d="M5.500 2.500l5 5M10.500 2.500l-5 5" stroke="#fff" stroke-width="1.300"/></svg></div>
  <div class="box">
    <div class="tree">
      <div class="row"><i class="tw shut"></i><span class="ic"><svg><use href="#clock"/></svg></span><span>Recently used</span></div>
      <div class="row"><i class="tw open"></i><span class="ic"><svg><use href="#q"/></svg></span><span>Raster analysis</span></div>
      <div class="row l1"><i class="tw"></i><span class="ic"><svg><use href="#sgear"/></svg></span><span class="snug">Raster boolean AND</span></div>
      <div class="row l1"><i class="tw"></i><span class="ic"><svg><use href="#sgear"/></svg></span><span class="snug">Raster boolean OR</span></div>
      <div class="row l1 sel"><i class="tw"></i><span class="ic"><svg><use href="#sgear-sel"/></svg></span><span>Raster calculator</span></div>
      <div class="row l1"><i class="tw"></i><span class="ic"><svg><use href="#sgear"/></svg></span><span class="cut">Raster layer z</span></div>
      <div class="row l1"><i class="tw"></i><span class="ic"><svg><use href="#sgear"/></svg></span><span class="cut">Raster surfac</span></div>
      <div class="row l1"><i class="tw"></i><span class="ic"><svg><use href="#sgear"/></svg></span><span class="cut">Reclassify by</span></div>
      <div class="row l1"><i class="tw"></i><span class="ic"><svg><use href="#sgear"/></svg></span><span class="cut">Reclassify by</span></div>
      <div class="row"><i class="tw open"></i><span class="ic"><svg><use href="#q"/></svg></span><span>Vector analysis</span></div>
      <div class="row l1"><i class="tw"></i><span class="ic"><svg><use href="#overlap"/></svg></span><span>Overlap analysis</span></div>
      <div class="row"><i class="tw open"></i><span class="ic"><svg><use href="#q"/></svg></span><span>Vector table</span></div>
      <div class="row l1"><i class="tw"></i><span class="ic"><svg><use href="#sgear"/></svg></span><span>Advanced Python field calculator</span></div>
      <div class="row l1"><i class="tw"></i><span class="ic"><svg><use href="#sgear"/></svg></span><span>Field calculator</span></div>
      <div class="row"><i class="tw open"></i><span class="ic"><svg><use href="#gdal"/></svg></span><span>GDAL</span></div>
      <div class="row l1 bare"><i class="tw open"></i><span>Raster miscellaneous</span></div>
      <div class="row l2"><i class="tw"></i><span class="ic"><svg><use href="#gdal"/></svg></span><span>Raster calculator</span></div>
      <div class="row"><i class="tw open"></i><span class="ic"><svg><use href="#grass"/></svg></span><span>GRASS</span></div>
      <div class="row l1 bare"><i class="tw open"></i><span>Imagery (i.*)</span></div>
      <div class="row l2"><i class="tw"></i><span class="ic"><svg><use href="#grass"/></svg></span><span>i.aster.toar</span></div>
      <div class="row l2"><i class="tw"></i><span class="ic"><svg><use href="#grass"/></svg></span><span>i.biomass</span></div>
      <div class="row l2"><i class="tw"></i><span class="ic"><svg><use href="#grass"/></svg></span><span>i.evapo.mh</span></div>
      <div class="row l2"><i class="tw"></i><span class="ic"><svg><use href="#grass"/></svg></span><span>i.evapo.pm</span></div>
      <div class="row l2"><i class="tw"></i><span class="ic"><svg><use href="#grass"/></svg></span><span>i.evapo.pt</span></div>
      <div class="row l2"><i class="tw"></i><span class="ic"><svg><use href="#grass"/></svg></span><span>i.landsat.toar</span></div>
      <div class="row l2"><i class="tw"></i><span class="ic"><svg><use href="#grass"/></svg></span><span>i.oif</span></div>
      <div class="row l2"><i class="tw"></i><span class="ic"><svg><use href="#grass"/></svg></span><span>i.vi</span></div>
      <div class="row l1 bare"><i class="tw open"></i><span>Raster (r.*)</span></div>
      <div class="row l2"><i class="tw"></i><span class="ic"><svg><use href="#grass"/></svg></span><span>r.geomorphon</span></div>
    </div>
    <div class="vs"><i class="btn up"></i><i class="thumb"></i><i class="btn down"></i></div>
  </div>
</aside>
</main>

<footer class="status">
  <div class="locate"><svg><use href="#lens"/></svg><span>Type to locate (Ctrl+K)</span></div>
  <span class="lab legend">1 leg</span><span class="lab coord">oordinat</span><div class="inp xy">387201,2903464</div>
  <svg class="bug" viewBox="0 0 17 17"><path d="M2 4q0-3 3-2l4 2 5-3M3 11q-3-5 1-5l9 2q4 2 2 5-3 4-7 2zM5 3l8 9M9 2l2 10M3 8l7 6M14 4l1 4" fill="none" stroke="#222" stroke-width="1.300"/></svg>
  <span class="lab scale">cal</span><div class="inp combo"><span>1:152242</span><b><i class="dd"></i></b></div>
  <svg class="lock" viewBox="0 0 14 16"><path d="M3.500 8V4.500q0-3 3.500-3t3.500 3V8" fill="none" stroke="#999" stroke-width="1.600"/><rect x="1" y="7.500" width="12" height="8" rx="1" fill="#777"/></svg>
  <span class="lab mag">agnifie</span><div class="inp spin s1"><span>100%</span><b><i class="u"></i><i class="d"></i></b></div>
  <span class="lab rot">otatio</span><div class="inp spin s2"><span>0.0 °</span><b><i class="u"></i><i class="d"></i></b></div>
  <i class="cb"><svg><use href="#tick"/></svg></i><span class="render">Render</span>
  <svg class="world" viewBox="0 0 14 14"><circle cx="7" cy="7" r="6.500" fill="#8d8d8d"/><path d="M0 7h14M7 0v14M1.500 3.500h11M1.500 10.500h11" stroke="#ddd" stroke-width=".8"/><ellipse cx="7" cy="7" rx="3" ry="6.500" fill="none" stroke="#ddd" stroke-width=".8"/></svg><span class="epsg">EPSG:32646</span>
  <svg class="msg" viewBox="0 0 16 16"><path d="M4 1h8q4 0 4 4v2q0 4-3 4.500l1 3.500-4-3H4q-4 0-4-4V5q0-4 4-4z" fill="#767676"/><path d="M3.500 5.500h2v2h-2zM7 5.500h2v2H7zM10.500 5.500h2v2h-2z" fill="#fff"/></svg>
  <i class="sizegrip"></i>
</footer>
</div>

<div class="tooltip"><strong>Raster calculator</strong><p>Algorithm ID:</p><em>'qgis:rastercalculator'</em></div>
<svg class="pointer" viewBox="0 0 12 19"><path d="M.7 1v14.500l3.400-3.200 2.300 5.500 2.500-1-2.400-5.300h4.700z" fill="#fff" stroke="#222"/></svg>
</div>
</body>
</html>
```
FILE: styles.css
```css
* { box-sizing: border-box; }
html, body { margin: 0; background: #fff; }
body { font: 12px/18px "Open Sans", "Noto Sans", sans-serif; letter-spacing: -0.27px; color: #111; width: 1032px; height: 753px; overflow: hidden; }
i { font-style: normal; }
svg { display: block; flex: none; }
.defs { position: absolute; width: 0; height: 0; }

.window { position: relative; display: flex; flex-direction: column; width: 1032px; height: 753px; padding: 1px 7px 7px 6px; border: 1px solid #1b2433; border-radius: 7px; box-shadow: inset 0 0 0 1px #e9f4fd; background: linear-gradient(180deg, #d5e7f8 0, #dcebf9 206px, #bcd8f3 208px, #c5dff8 100%); }
.titlebar { display: flex; align-items: flex-start; flex: none; height: 27px; margin: 0 -6px 0 -5px; padding-left: 7px; border-radius: 6px 6px 0 0; background: linear-gradient(100deg, #dbeaf8 0, #d3e5f7 18%, #bad5ef 35%, #c9e1fa 52%, #bfd9f3 64%, #cfe4fa 72%, #bcd5ee 80%, #cde1f6 100%); }
.logo { width: 17px; height: 17px; margin: 5px 0 0 -1px; }
.title { margin: 4px 0 0 4px; color: #000; }
.winbtns { display: flex; height: 19px; margin: -1px 5px 0 auto; border: 1px solid #5c6b7c; border-top: 0; border-radius: 0 0 5px 5px; overflow: hidden; }
.wb { display: flex; align-items: center; justify-content: center; width: 28px; height: 18px; border-right: 1px solid #6d7c8d; background: linear-gradient(#e6eff8 0 45%, #b4c6da 50%, #c8dbef); }
.wb:nth-child(2) { width: 27px; }
.wb.x { width: 46px; border: 0; background: linear-gradient(#e5a596 0 45%, #c04a32 50%, #d2735c); }
.wb svg { width: 12px; height: 10px; }
.min { width: 12px; height: 5px; margin-top: 4px; background: #fff; border: 1px solid #5d6775; border-radius: 1px; }
.max { width: 12px; height: 10px; background: #9fb2c8; border: 1px solid #5d6775; box-shadow: inset 0 0 0 2px #fff, inset 0 0 0 3px #5d6775; border-radius: 1px; }

.app { display: flex; flex-direction: column; height: 716px; flex: none; border: 1px solid #68737f; background: #f2f2f2; }
.menu { display: grid; grid-template-columns: 50px 35px 39px 42px 56px 53px 48px 46px 62px 38px 43px 71px 40px; height: 20px; padding: 1px 0 0 10px; flex: none; border-bottom: 1px solid #dedede; color: #000; letter-spacing: -0.2px; }
.menu u { text-underline-offset: 2px; text-decoration-thickness: 1px; }
.toolbar { display: flex; align-items: center; height: 39px; padding-left: 1px; flex: none; background: linear-gradient(#fcfcfc, #efefef); border-bottom: 1px solid #b9b9b9; }
.toolbar + .toolbar { border-bottom-color: #bdbdbd; }
.grip { width: 12px; height: 18px; flex: none; padding: 0 3px; background: radial-gradient(circle at 1px 1px, #cbcbcb .8px, transparent 1.100px) 0 0 / 3px 3px content-box; background-clip: content-box; }
.grip.wide { width: 16px; padding: 0 5px; }
.tb { width: 33px; height: 34px; display: flex; align-items: center; justify-content: center; flex: none; }
.tb svg { width: 24px; height: 24px; }
.off svg, svg.off { opacity: .28; filter: grayscale(.6); }
.pressed { background: #dedede; border: 1px solid #aaa; border-radius: 3px; height: 32px; }
.dd { width: 12px; height: 5px; flex: none; background: #6b6b6b; clip-path: polygon(2px 0, 10px 0, 6px 5px); }
.dd.dim { background: #b0b0b0; }
.sep { width: 7px; height: 19px; flex: none; background: linear-gradient(#ccc, #ccc) 3px 0 / 1px 100% no-repeat; }
.more { width: 27px; text-align: center; font-size: 14px; font-weight: 700; color: #000; flex: none; padding-left: 5px; line-height: 20px; }
.more.near { width: 21px; padding-left: 2px; }

.work { display: flex; height: 588px; flex: none; }
.left { width: 220px; display: flex; flex-direction: column; flex: none; padding-right: 7px; }
.dock h2 { display: flex; align-items: center; height: 20px; margin: 0; padding: 0 3px 0 4px; font: inherit; letter-spacing: -0.2px; color: #000; }
.dockbtns { display: flex; gap: 3px; margin-left: auto; }
.dockbtns svg { width: 11px; height: 11px; }
.left .dockbtns { margin-right: -1px; }
.mini { display: flex; align-items: center; gap: 9px; height: 29px; padding: 0 0 1px 8px; }
.mini svg { width: 16px; height: 16px; }
.left .mini svg:first-child { margin-left: -1px; }
.layers .mini { height: 30px; padding-bottom: 2px; }
.layers .mini .dd { margin: 0 -2px 0 -7px; }
.layers .mini .more { width: 14px; padding: 0; margin-left: 3px; }
.box { display: grid; grid-template: minmax(0, 1fr) 14px / minmax(0, 1fr) 14px; border: 1px solid #b9b9b9; background: #fff; overflow: hidden; }
.browser .box { height: 244px; }
.splitter { height: 7px; background: radial-gradient(circle, #bbb .8px, transparent 1px) 0 0 / 3px 3px repeat-x content-box; padding: 2px 98px; }
.layers .box { height: 238px; }
.tree { overflow: hidden; padding-top: 1px; }
.browser .tree { padding-top: 2px; }
.row { display: flex; align-items: center; height: 18px; white-space: nowrap; color: #111; }
.l1 { padding-left: 20px; } .l2 { padding-left: 40px; } .l3 { padding-left: 60px; }
.row.bare { height: 15px; padding-left: 20px; } .bare .tw { margin-right: 3px; }
.snug { letter-spacing: -0.36px; }
.tw { width: 20px; height: 8px; flex: none; }
.tw.open { background: #666; clip-path: polygon(6px 2px, 14px 2px, 10px 6px); }
.tw.shut { background: #777; clip-path: polygon(8px 0, 12px 4px, 8px 8px); }
.ic { display: flex; justify-content: center; width: 22px; margin-right: 3px; flex: none; }
.ic svg { width: 16px; height: 16px; }
.ic svg.s13 { width: 13px; height: 13px; } .ic svg.s14 { width: 14px; height: 14px; }
.ic.grey { color: #8a8a8a; } .ic.blue { color: #7593b5; }
.hover { background: #f2f2f2; }
.vs { display: flex; flex-direction: column; width: 14px; min-height: 0; border-left: 1px solid #bbb; background: #e9e9e9; }
.hs { display: flex; border-top: 1px solid #bbb; background: #e9e9e9; }
.corner { background: #f3f3f3; border: 1px solid #bbb; border-width: 1px 0 0 1px; }
.btn { position: relative; width: 13px; height: 13px; flex: none; background: #f8f8f8; }
.btn::after { content: ""; display: block; width: 13px; height: 13px; background: #555; }
.up::after { clip-path: polygon(3px 8px, 10px 8px, 6.5px 4px); } .down::after { clip-path: polygon(3px 5px, 10px 5px, 6.5px 9px); }
.lf::after { clip-path: polygon(8px 3px, 8px 10px, 4px 6.5px); } .rt::after { clip-path: polygon(5px 3px, 5px 10px, 9px 6.5px); }
.thumb { background: linear-gradient(90deg, #fefefe, #f3f3f3); border: 1px solid #bbb; }
.vs .thumb { border-width: 1px 0; } .hs .thumb { border-width: 0 1px; }
.vs .down { margin-top: auto; border-top: 1px solid #bbb; } .hs .rt { margin-left: auto; border-left: 1px solid #bbb; }
.browser .vs .thumb { height: 72px; } .browser .hs .thumb { width: 114px; }
.layers .vs .thumb { height: 152px; } .layers .hs .thumb { width: 162px; }
.bold .row { font-weight: 700; letter-spacing: -0.45px; background: linear-gradient(#e6e6e6, #e6e6e6) 193px 1px / 3px 16px no-repeat; }
.bold .row.leg { font-weight: 400; padding-left: 43px; background: none; }
.ul { text-decoration: underline; text-underline-offset: 2px; }
.sw { width: 16px; height: 16px; margin-right: 6px; background: #000; } .sw.none { background: none; }
.cb { display: block; width: 13px; height: 13px; flex: none; border: 1px solid #a8a8a8; background: #fff; }
.cb svg { width: 13px; height: 13px; margin: -1px; overflow: visible; }
.bold .cb { margin: 0 -1px 0 3px; }
.bold .row .ic { margin-left: 5px; margin-right: 3px; }
.ln { width: 16px; height: 1px; background: #5b93c8; } .fill { width: 16px; height: 16px; background: #bad5e6; border: 1px solid #7e97a6; }

.canvas { position: relative; width: 531px; height: 588px; flex: none; background: #000; border: 1px solid #b4b4b4; border-width: 1px 1px 1px 0; overflow: hidden; }
.map { width: 530px; height: 588px; margin-top: -1px; shape-rendering: crispEdges; }
.note { position: absolute; left: 0; top: -1px; width: 530px; height: 587px; }
.water { fill: #919191; }
.dots path { fill: none; stroke: #858585; stroke-width: 3; stroke-dasharray: 4 6 3 8; }
.solid { fill: none; stroke: #919191; stroke-width: 3; }
.bright { fill: none; stroke: #f4f4f4; stroke-width: 3; }
.part { stroke-dasharray: 14 3 6 4; }
.wdots path { fill: none; stroke: #fff; stroke-width: 3; stroke-dasharray: 4 8; }
.callout { font: 23.500px "Liberation Sans", Arial, sans-serif; letter-spacing: 0; fill: #ee4023; }

.right { flex: 1; padding-left: 6px; min-width: 0; }
.right h2 { padding: 0 1px 0 4px; }
.right .mini { padding-left: 8px; }
.mini svg.w18 { width: 18px; }
.right .mini svg:nth-child(3) { margin-left: -1px; }
.right .mini .sep { margin: 0 -5px; }
.search { display: flex; align-items: center; height: 22px; padding: 0 7px 0 8px; border: 1px solid #b0b0b0; border-radius: 2px; background: #fff; }
.search svg { width: 13px; height: 13px; } .search span { margin-left: 6px; }
.search .clear { width: 14px; height: 10px; margin-left: auto; }
.right .box { height: 517px; grid-template: minmax(0, 1fr) / minmax(0, 1fr) 14px; border-right: 0; }
.right .tree { padding-top: 2px; }
.right .vs .thumb { height: 141px; }
.sel { background: #5ea6f6; color: #fff; }
.cut { width: 68px; letter-spacing: -0.4px; }

.status { display: flex; align-items: center; height: 28px; flex: none; padding: 3px 0 0 4px; color: #111; }
.locate { display: flex; align-items: center; width: 200px; height: 22px; padding-left: 8px; border: 1px solid #b5b5b5; border-radius: 3px; background: #fff; color: #868686; }
.locate svg { width: 13px; height: 13px; margin-right: 6px; }
.lab { overflow: hidden; white-space: nowrap; flex: none; letter-spacing: -0.8px; }
.legend { width: 21px; margin-left: 8px; letter-spacing: -0.6px; } .coord { width: 41px; margin-left: 8px; }
.inp { display: flex; align-items: center; height: 22px; border: 1px solid #b0b0b0; border-radius: 2px; background: #fff; padding-left: 6px; letter-spacing: 0; flex: none; overflow: hidden; }
.xy { width: 98px; margin-left: 2px; letter-spacing: -0.75px; }
.bug { width: 17px; height: 17px; margin-left: 3px; }
.scale { width: 13px; margin-left: 12px; letter-spacing: -1.1px; } .combo { width: 82px; margin-left: 3px; padding-left: 4px; letter-spacing: -0.75px; }
.inp b { display: flex; flex-direction: column; align-items: center; justify-content: center; gap: 4px; width: 20px; height: 22px; margin-left: auto; border-left: 1px solid #bbb; background: #f7f7f7; }
.inp.spin b { width: 14px; }
.u, .d { width: 8px; height: 4px; background: #555; } .u { clip-path: polygon(0 100%, 50% 0, 100% 100%); } .d { clip-path: polygon(0 0, 100% 0, 50% 100%); }
.lock { width: 14px; height: 16px; margin-left: 10px; }
.mag { width: 31px; margin-left: 8px; letter-spacing: -1.1px; } .s1 { width: 88px; margin-left: 2px; padding-left: 4px; letter-spacing: -0.8px; }
.rot { width: 30px; margin-left: 8px; letter-spacing: -0.7px; } .s2 { width: 84px; margin-left: 8px; padding-left: 4px; letter-spacing: -0.3px; }
.status > .cb { margin-left: 7px; } .render { margin-left: 4px; width: 38px; }
.world { width: 14px; height: 14px; margin-left: 16px; } .epsg { margin-left: 3px; width: 64px; letter-spacing: -0.6px; }
.msg { width: 16px; height: 15px; margin-left: 15px; }
.sizegrip { width: 11px; height: 11px; margin: 11px 0 0 auto; background: radial-gradient(circle, #aaa .8px, transparent 1px) 0 0 / 4px 4px; clip-path: polygon(100% 0, 100% 100%, 0 100%); }

.tooltip { position: absolute; left: 898px; top: 295px; width: 120px; height: 62px; padding: 1px 3px; border: 1px solid #111; background: #ffffe8; box-shadow: 2px 2px 3px rgba(0,0,0,.4); line-height: 18px; white-space: nowrap; color: #111; }
.tooltip strong { display: block; letter-spacing: -0.6px; } .tooltip p { margin: 10px 0 0; line-height: 15px; } .tooltip em { display: block; line-height: 15px; letter-spacing: -0.12px; }
.pointer { position: absolute; left: 896px; top: 279px; width: 12px; height: 19px; }

.glyph-a { font: 13px "DejaVu Sans", sans-serif; fill: #333; }
.glyph-i { font: italic 700 15px "Liberation Serif", serif; fill: #fff; }
.glyph-is { font: italic 700 12px "Liberation Serif", serif; fill: #fff; }
.glyph-e { font: italic 25px "Liberation Serif", serif; fill: #555; }
.glyph-es { font: italic 17px "Liberation Serif", serif; fill: #777; }
.glyph-t { font: 700 15px "Liberation Serif", serif; fill: #4b4b4b; }
.glyph-abc { font: 700 9px "Liberation Sans", sans-serif; letter-spacing: 0; fill: #777; }
.glyph-w { font: 700 14px "Liberation Sans", sans-serif; fill: #080808; stroke: #080808; stroke-width: .5; } .red { fill: #e33a2e; stroke: #e33a2e; } .small { font-size: 12px; }
.glyph-q { font: 17px "Liberation Serif", serif; fill: #fff; }
.glyph-g { font: 700 7px "Liberation Sans", sans-serif; fill: #000; }
```
